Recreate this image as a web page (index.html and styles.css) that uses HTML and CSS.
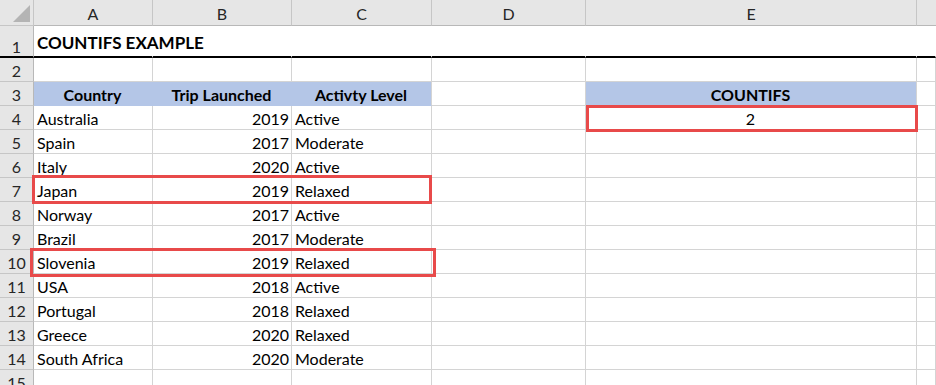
FILE: index.html
```html
<!DOCTYPE html>
<html lang="en">
<head>
  <meta charset="UTF-8">
  <title>COUNTIFS example</title>
  <link rel="stylesheet" href="styles.css">
</head>
<body>
  <div class="sheet">
    <!-- column headers -->
    <div class="corner"><span class="corner-mark"></span></div>
    <div class="col-head">A</div>
    <div class="col-head">B</div>
    <div class="col-head">C</div>
    <div class="col-head">D</div>
    <div class="col-head">E</div>
    <div class="col-head col-head-last"></div>

    <!-- row 1: title -->
    <div class="row-head row-title">1</div>
    <div class="cell title-cell title">COUNTIFS EXAMPLE</div>
    <div class="cell title-cell"></div>
    <div class="cell title-cell"></div>
    <div class="cell title-cell"></div>
    <div class="cell title-cell"></div>
    <div class="cell title-cell"></div>

    <!-- row 2 -->
    <div class="row-head">2</div>
    <div class="cell"></div><div class="cell"></div><div class="cell"></div>
    <div class="cell"></div><div class="cell"></div><div class="cell"></div>

    <!-- row 3: table headers -->
    <div class="row-head">3</div>
    <div class="cell head-fill bold center">Country</div>
    <div class="cell head-fill bold center">Trip Launched</div>
    <div class="cell head-fill head-fill-end bold center">Activty Level</div>
    <div class="cell"></div>
    <div class="cell head-fill head-fill-end bold center">COUNTIFS</div>
    <div class="cell"></div>

    <div class="row-head">4</div>
    <div class="cell">Australia</div><div class="cell num">2019</div><div class="cell">Active</div>
    <div class="cell"></div><div class="cell center">2</div><div class="cell"></div>

    <div class="row-head">5</div>
    <div class="cell">Spain</div><div class="cell num">2017</div><div class="cell">Moderate</div>
    <div class="cell"></div><div class="cell"></div><div class="cell"></div>

    <div class="row-head">6</div>
    <div class="cell">Italy</div><div class="cell num">2020</div><div class="cell">Active</div>
    <div class="cell"></div><div class="cell"></div><div class="cell"></div>

    <div class="row-head">7</div>
    <div class="cell">Japan</div><div class="cell num">2019</div><div class="cell">Relaxed</div>
    <div class="cell"></div><div class="cell"></div><div class="cell"></div>

    <div class="row-head">8</div>
    <div class="cell">Norway</div><div class="cell num">2017</div><div class="cell">Active</div>
    <div class="cell"></div><div class="cell"></div><div class="cell"></div>

    <div class="row-head">9</div>
    <div class="cell">Brazil</div><div class="cell num">2017</div><div class="cell">Moderate</div>
    <div class="cell"></div><div class="cell"></div><div class="cell"></div>

    <div class="row-head">10</div>
    <div class="cell">Slovenia</div><div class="cell num">2019</div><div class="cell">Relaxed</div>
    <div class="cell"></div><div class="cell"></div><div class="cell"></div>

    <div class="row-head">11</div>
    <div class="cell">USA</div><div class="cell num">2018</div><div class="cell">Active</div>
    <div class="cell"></div><div class="cell"></div><div class="cell"></div>

    <div class="row-head">12</div>
    <div class="cell">Portugal</div><div class="cell num">2018</div><div class="cell">Relaxed</div>
    <div class="cell"></div><div class="cell"></div><div class="cell"></div>

    <div class="row-head">13</div>
    <div class="cell">Greece</div><div class="cell num">2020</div><div class="cell">Relaxed</div>
    <div class="cell"></div><div class="cell"></div><div class="cell"></div>

    <div class="row-head">14</div>
    <div class="cell">South Africa</div><div class="cell num">2020</div><div class="cell">Moderate</div>
    <div class="cell"></div><div class="cell"></div><div class="cell"></div>

    <div class="row-head">15</div>
    <div class="cell"></div><div class="cell"></div><div class="cell"></div>
    <div class="cell"></div><div class="cell"></div><div class="cell"></div>

    <!-- highlight boxes drawn over the grid -->
    <div class="mark mark-result"></div>
    <div class="mark mark-japan"></div>
    <div class="mark mark-slovenia"></div>
  </div>
</body>
</html>
```

FILE: styles.css
```css
/* Page */
html, body {
  margin: 0;
  padding: 0;
  background: #ffffff;
  overflow: hidden;
}
body {
  font-family: Lato, "Open Sans", "Liberation Sans", sans-serif;
  font-size: 16px;
  color: #000000;
}

/* Sheet grid: row header, A..E, and a partly shown F */
.sheet {
  --grid-line: #d4d4d4;
  --head-bg: #e6e6e6;
  --head-line: #c6c6c6;
  --fill: #b4c6e7;
  --mark: #e84a4a;
  position: relative;
  display: grid;
  grid-template-columns: 34px 119px 139px 140px 154px 331px 1fr;
  grid-template-rows: 26px 32px repeat(14, 24px);
  width: 936px;
}

/* Headers */
.corner, .col-head, .row-head {
  box-sizing: border-box;
  background: var(--head-bg);
  color: #262626;
  font-size: 16px;
}
.corner {
  position: relative;
  border-right: 1px solid var(--head-line);
  border-bottom: 1px solid var(--head-line);
}
.corner-mark {
  position: absolute;
  right: 3px;
  bottom: 3px;
  width: 0;
  height: 0;
  border-left: 17px solid transparent;
  border-bottom: 17px solid #b4b4b4;
}
.col-head {
  display: flex;
  align-items: center;
  justify-content: center;
  border-right: 1px solid var(--head-line);
  border-bottom: 1px solid #b8b8b8;
  padding-top: 2px;
}
.col-head-last {
  border-right: none;
}
.row-head {
  display: flex;
  align-items: flex-end;
  justify-content: center;
  padding-bottom: 1px;
  border-right: 1px solid #b8b8b8;
  border-bottom: 1px solid var(--head-line);
}
.row-title {
  border-bottom: 2px solid #000000;
  padding-bottom: 0;
}

/* Cells */
.cell {
  box-sizing: border-box;
  display: flex;
  align-items: flex-end;
  padding: 0 4px 1px 3px;
  border-right: 1px solid var(--grid-line);
  border-bottom: 1px solid var(--grid-line);
  white-space: nowrap;
  overflow: visible;
}
.title-cell {
  border-right-color: #ffffff;
  border-bottom: 2px solid #000000;
  padding-bottom: 3px;
}
.title {
  font-size: 17px;
  font-weight: bold;
}
.bold {
  font-weight: bold;
}
.center {
  justify-content: center;
}
.num {
  justify-content: flex-end;
  padding-right: 2px;
}
.head-fill {
  background: var(--fill);
  border-right-color: var(--fill);
  border-bottom-color: var(--fill);
}
.head-fill-end {
  border-right-color: var(--grid-line);
}

/* Red highlight boxes, laid over their grid area */
.mark {
  position: absolute;
  border: 3px solid var(--mark);
  pointer-events: none;
}
.mark-result {
  grid-row: 5 / 6;
  grid-column: 6 / 7;
  top: -1px;
  right: -1px;
  bottom: -2px;
  left: 0;
}
.mark-japan {
  grid-row: 8 / 9;
  grid-column: 2 / 5;
  top: -3px;
  right: 0;
  bottom: -2px;
  left: -2px;
}
.mark-slovenia {
  grid-row: 11 / 12;
  grid-column: 2 / 5;
  top: -2px;
  right: -4px;
  bottom: -3px;
  left: -4px;
}
```
